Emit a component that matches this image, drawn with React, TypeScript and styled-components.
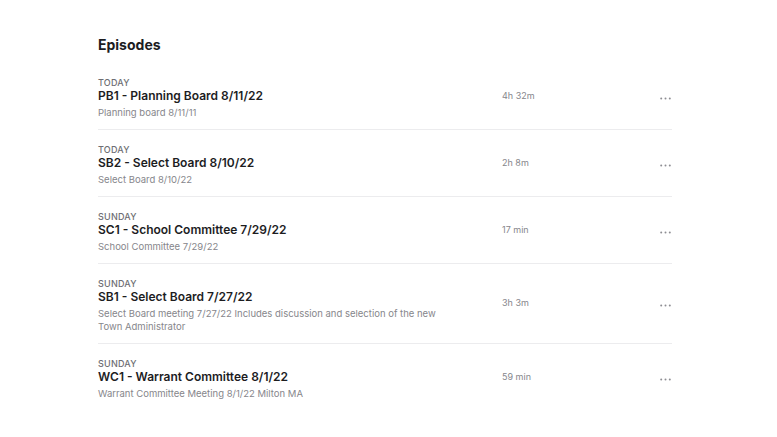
import React from 'react';
import styled, { createGlobalStyle } from 'styled-components';

type Episode = {
  day: string;
  title: string;
  description: string;
  duration: string;
};

const episodes: Episode[] = [
  { day: 'Today', title: 'PB1 - Planning Board 8/11/22', description: 'Planning board 8/11/11', duration: '4h 32m' },
  { day: 'Today', title: 'SB2 - Select Board 8/10/22', description: 'Select Board 8/10/22', duration: '2h 8m' },
  { day: 'Sunday', title: 'SC1 - School Committee 7/29/22', description: 'School Committee 7/29/22', duration: '17 min' },
  {
    day: 'Sunday',
    title: 'SB1 - Select Board 7/27/22',
    description: 'Select Board meeting 7/27/22 Includes discussion and selection of the new Town Administrator',
    duration: '3h 3m'
  },
  { day: 'Sunday', title: 'WC1 - Warrant Committee 8/1/22', description: 'Warrant Committee Meeting 8/1/22 Milton MA', duration: '59 min' }
];

const GlobalStyle = createGlobalStyle`
  body {
    margin: 0;
    background: #ffffff;
    font-family: Inter, 'Noto Sans', sans-serif;
    -webkit-font-smoothing: antialiased;
  }
`;

const MoreIcon: React.FC = () => (
  <svg width="11" height="3" viewBox="0 0 11 3" fill="#8e8e93">
    <circle cx="1.2" cy="1.5" r="1" />
    <circle cx="5.5" cy="1.5" r="1" />
    <circle cx="9.8" cy="1.5" r="1" />
  </svg>
);

const App: React.FC = () => {
  return (
    <>
      <GlobalStyle />
      <Page>
        <Heading>Episodes</Heading>
        <List>
          {episodes.map((ep, i) => (
            <Row key={i}>
              <Info>
                <Day>{ep.day}</Day>
                <Title>{ep.title}</Title>
                <Description>{ep.description}</Description>
              </Info>
              <Duration>{ep.duration}</Duration>
              <MoreButton aria-label="More">
                <MoreIcon />
              </MoreButton>
            </Row>
          ))}
        </List>
      </Page>
    </>
  );
};

const Page = styled.div`
  width: 574px;
  margin-left: 98px;
  padding-top: 36px;
`;

const Heading = styled.h1`
  margin: 0 0 10px;
  font-size: 14px;
  line-height: 17px;
  font-weight: 700;
  color: #1d1d1f;
`;

const List = styled.div`
  display: flex;
  flex-direction: column;
`;

const Row = styled.div`
  display: grid;
  grid-template-columns: 404px 1fr auto;
  align-items: center;
  padding: 14px 0 10px;
  border-bottom: 1px solid #ececee;

  &:last-child {
    border-bottom: none;
  }
`;

const Info = styled.div`
  display: flex;
  flex-direction: column;
  max-width: 350px;
`;

const Day = styled.div`
  font-size: 9px;
  line-height: 11px;
  font-weight: 500;
  text-transform: uppercase;
  letter-spacing: 0.2px;
  color: #6e6e73;
`;

const Title = styled.div`
  font-size: 12px;
  line-height: 16px;
  font-weight: 600;
  color: #1d1d1f;
`;

const Description = styled.div`
  margin-top: 2px;
  font-size: 9.5px;
  line-height: 13px;
  color: #86868b;
`;

const Duration = styled.div`
  font-size: 9px;
  line-height: 11px;
  color: #86868b;
  margin-top: -6px;
`;

const MoreButton = styled.button`
  display: flex;
  align-items: center;
  padding: 0 1px 0 0;
  border: none;
  background: none;
  cursor: pointer;
`;

export default App;
